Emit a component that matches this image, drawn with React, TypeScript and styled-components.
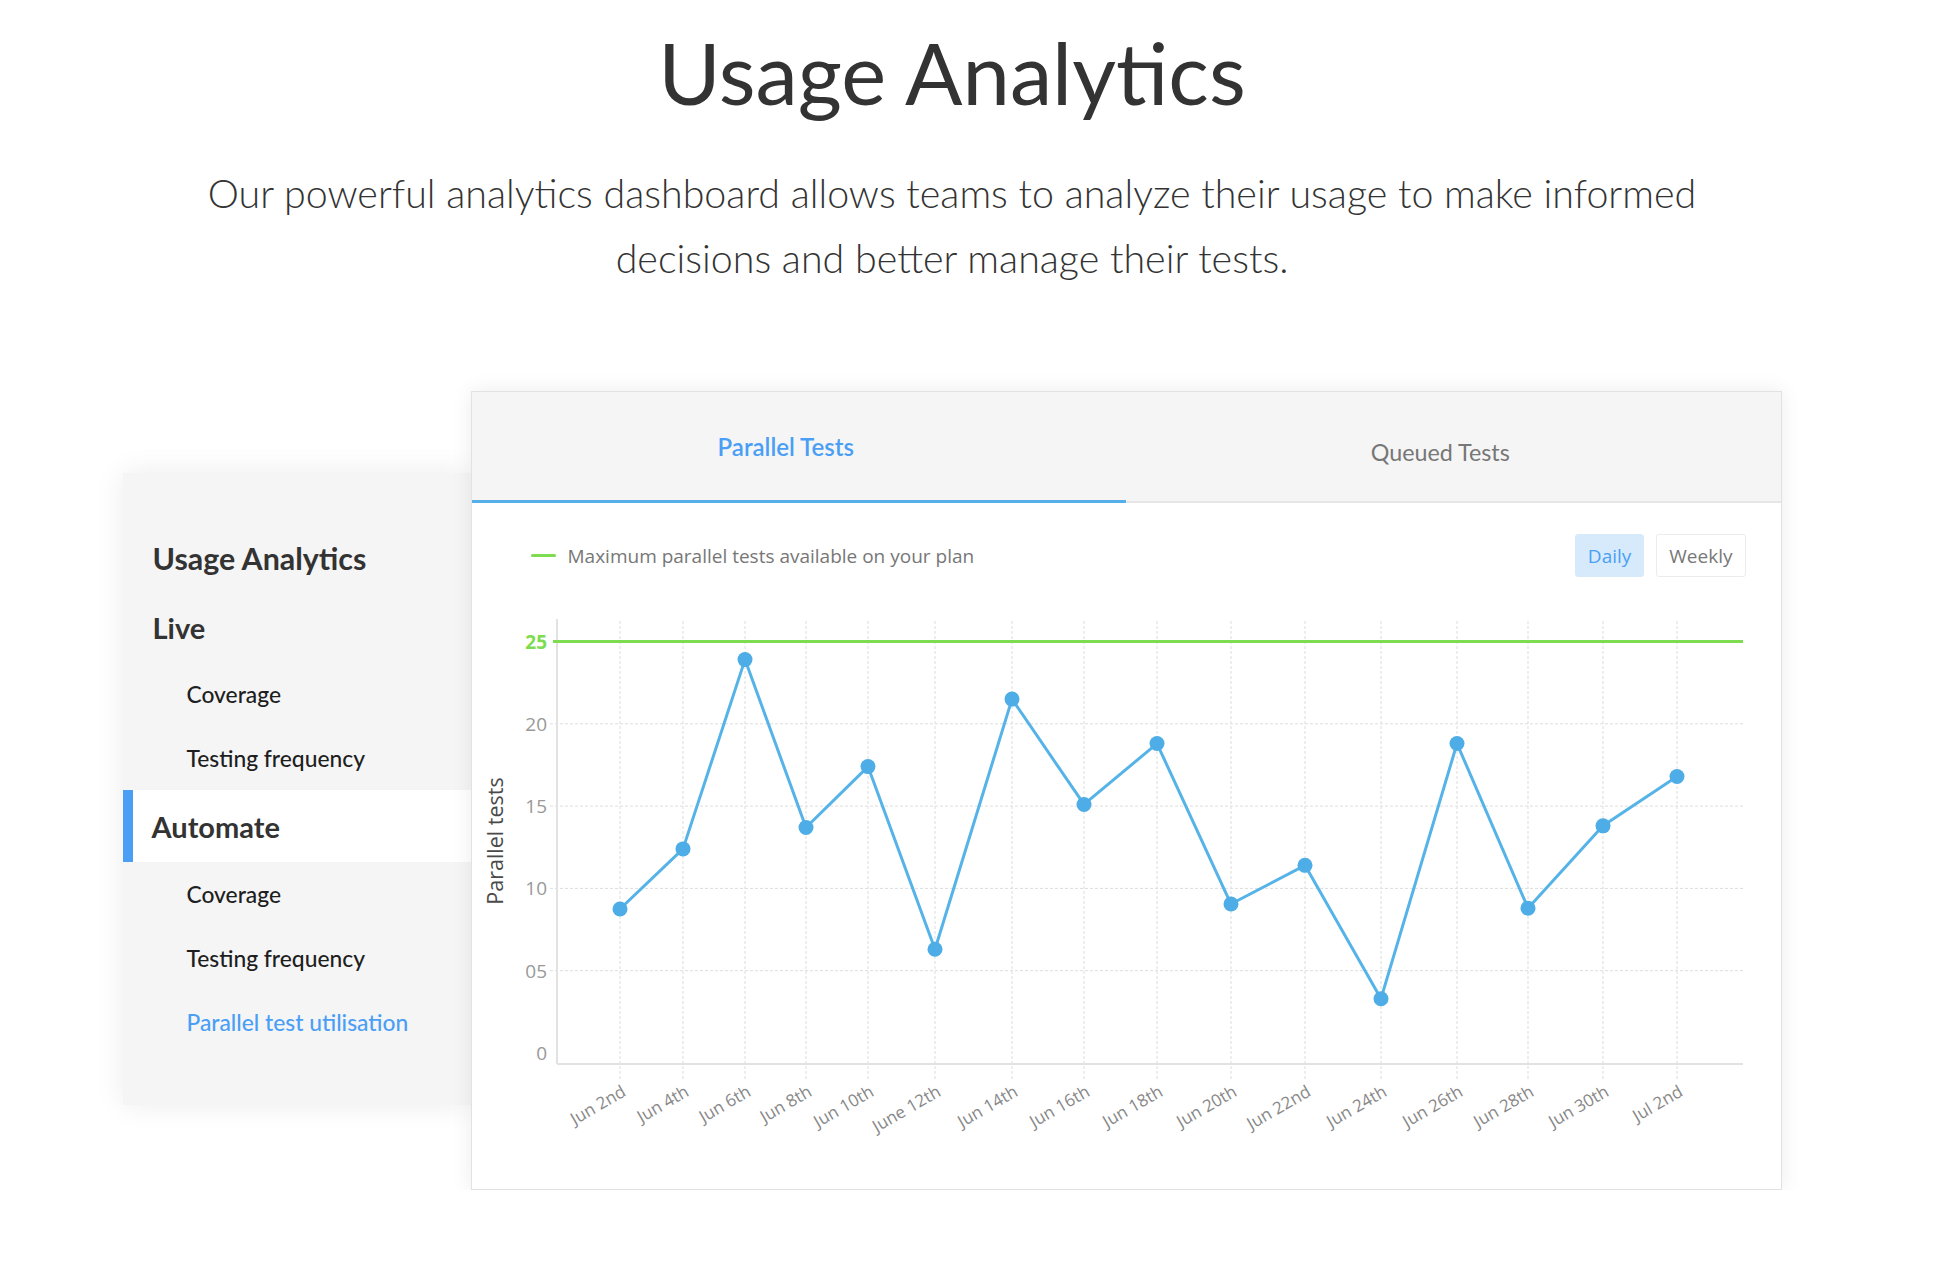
import React from "react";
import styled, { createGlobalStyle } from "styled-components";

const GlobalStyle = createGlobalStyle`
  html, body { margin: 0; padding: 0; background: #ffffff; }
  body { font-family: Lato, "Open Sans", sans-serif; color: #333; }
  * { box-sizing: border-box; }
`;

const Page = styled.div`
  width: 1904px;
  padding-top: 21px;
  display: flex;
  flex-direction: column;
  align-items: center;
`;

const Hero = styled.header`
  display: flex;
  flex-direction: column;
  align-items: center;
  text-align: center;
`;

const Title = styled.h1`
  margin: 0;
  font-family: Lato, sans-serif;
  font-weight: 400;
  font-size: 85px;
  line-height: 103px;
  color: #333;
`;

const Lead = styled.p`
  margin: 36px 0 0;
  font-family: Lato, sans-serif;
  font-weight: 300;
  font-size: 39.4px;
  line-height: 65px;
  color: #333;
`;

const Showcase = styled.section`
  margin-top: 101px;
  display: flex;
  align-items: flex-start;
`;

const Sidebar = styled.nav`
  width: 348px;
  margin-top: 82px;
  padding: 51px 0;
  background: #f5f5f5;
  box-shadow: 0 0 28px rgba(0, 0, 0, 0.08);
  display: flex;
  flex-direction: column;
  position: relative;
  z-index: 0;
`;

const SideTitle = styled.div`
  height: 68px;
  line-height: 68px;
  padding-left: 30px;
  font-weight: 700;
  font-size: 30.4px;
  color: #333;
`;

const SideSection = styled.div<{ $active?: boolean }>`
  height: ${(p) => (p.$active ? "72px" : "70px")};
  display: flex;
  align-items: center;
  padding-left: ${(p) => (p.$active ? "19px" : "30px")};
  font-weight: 700;
  font-size: 29px;
  color: #333;
  background: ${(p) => (p.$active ? "#ffffff" : "transparent")};
  border-left: ${(p) => (p.$active ? "10px solid #4a9ff5" : "none")};
`;

const SideItem = styled.div<{ $active?: boolean }>`
  height: 64px;
  display: flex;
  align-items: center;
  padding-left: 64px;
  font-weight: 500;
  font-size: 22.8px;
  color: ${(p) => (p.$active ? "#4a9ff5" : "#1e1e1e")};
`;

const Card = styled.div`
  width: 1311px;
  background: #ffffff;
  border: 1px solid #e2e2e2;
  box-shadow: 0 0 20px rgba(0, 0, 0, 0.08);
  position: relative;
  z-index: 1;
`;

const Tabs = styled.div`
  display: flex;
  background: #f5f5f5;
`;

const Tab = styled.div<{ $active?: boolean }>`
  flex: 1;
  height: 111px;
  display: flex;
  align-items: center;
  justify-content: center;
  padding-right: 26px;
  padding-top: ${(p) => (p.$active ? "0" : "11px")};
  font-family: Lato, sans-serif;
  font-size: ${(p) => (p.$active ? "24px" : "23.3px")};
  font-weight: ${(p) => (p.$active ? 600 : 400)};
  color: ${(p) => (p.$active ? "#4a9ff5" : "#777")};
  border-bottom: ${(p) => (p.$active ? "3px solid #56afe8" : "2px solid #e6e6e6")};
`;

const CardBody = styled.div`
  padding-top: 31px;
`;

const Toolbar = styled.div`
  height: 43px;
  padding: 0 35px 0 59px;
  display: flex;
  align-items: center;
  justify-content: space-between;
`;

const Legend = styled.div`
  display: flex;
  align-items: center;
  gap: 12px;
  font-family: "Open Sans", sans-serif;
  font-size: 19px;
  color: #777;
`;

const Swatch = styled.span`
  width: 25px;
  height: 3px;
  border-radius: 2px;
  background: #7ddc50;
`;

const Toggle = styled.div`
  display: flex;
  gap: 12px;
`;

const ToggleButton = styled.button<{ $active?: boolean }>`
  height: 43px;
  padding: 0 12px;
  font-family: "Open Sans", sans-serif;
  font-size: 19px;
  border-radius: 3px;
  cursor: pointer;
  background: ${(p) => (p.$active ? "#d7eafc" : "#ffffff")};
  border: 1px solid ${(p) => (p.$active ? "#d7eafc" : "#ececec")};
  color: ${(p) => (p.$active ? "#4a9ff5" : "#777")};
`;

const ChartSvg = styled.svg`
  display: block;
  margin-top: 22px;
`;

/* chart geometry (page coordinates, shifted into the svg) */
const OX = 471;
const OY = 600;
const ZERO_Y = 1054;
const UNIT = 16.46;
const AXIS_X = 556;
const AXIS_Y = 1065;
const RIGHT_X = 1742;

const points: { label: string; x: number; v: number }[] = [
  { label: "Jun 2nd", x: 619, v: 8.75 },
  { label: "Jun 4th", x: 682, v: 12.4 },
  { label: "Jun 6th", x: 744, v: 23.9 },
  { label: "Jun 8th", x: 805, v: 13.7 },
  { label: "Jun 10th", x: 867, v: 17.4 },
  { label: "June 12th", x: 934, v: 6.3 },
  { label: "Jun 14th", x: 1011, v: 21.5 },
  { label: "Jun 16th", x: 1083, v: 15.1 },
  { label: "Jun 18th", x: 1156, v: 18.8 },
  { label: "Jun 20th", x: 1230, v: 9.05 },
  { label: "Jun 22nd", x: 1304, v: 11.4 },
  { label: "Jun 24th", x: 1380, v: 3.3 },
  { label: "Jun 26th", x: 1456, v: 18.8 },
  { label: "Jun 28th", x: 1527, v: 8.8 },
  { label: "Jun 30th", x: 1602, v: 13.8 },
  { label: "Jul 2nd", x: 1676, v: 16.8 },
];

const sx = (x: number) => x - OX;
const sy = (y: number) => y - OY;
const vy = (v: number) => sy(ZERO_Y - v * UNIT);

function Chart() {
  const yTicks = [
    { v: 0, label: "0" },
    { v: 5, label: "05" },
    { v: 10, label: "10" },
    { v: 15, label: "15" },
    { v: 20, label: "20" },
  ];
  const line = points.map((p) => `${sx(p.x)},${vy(p.v)}`).join(" ");
  return (
    <ChartSvg width={1309} height={590} viewBox="0 0 1309 590">
      {points.map((p) => (
        <line
          key={"vg" + p.label}
          x1={sx(p.x)}
          x2={sx(p.x)}
          y1={sy(622)}
          y2={sy(1080)}
          stroke="#dddddd"
          strokeWidth={1}
          strokeDasharray="3 2"
        />
      ))}
      {yTicks
        .filter((t) => t.v > 0)
        .map((t) => (
          <line
            key={"hg" + t.v}
            x1={sx(549)}
            x2={sx(RIGHT_X)}
            y1={vy(t.v)}
            y2={vy(t.v)}
            stroke="#dddddd"
            strokeWidth={1}
            strokeDasharray="3 2"
          />
        ))}
      <line x1={sx(AXIS_X)} x2={sx(AXIS_X)} y1={sy(620)} y2={sy(AXIS_Y)} stroke="#e2e2e2" strokeWidth={2} />
      <line x1={sx(AXIS_X)} x2={sx(RIGHT_X)} y1={sy(AXIS_Y)} y2={sy(AXIS_Y)} stroke="#e2e2e2" strokeWidth={2} />
      <line x1={sx(552)} x2={sx(RIGHT_X)} y1={vy(25)} y2={vy(25)} stroke="#7ddc50" strokeWidth={3} />

      {yTicks.map((t) => (
        <text
          key={"yl" + t.v}
          x={sx(546)}
          y={vy(t.v)}
          textAnchor="end"
          dominantBaseline="central"
          fontFamily="'Open Sans', sans-serif"
          fontSize={19}
          fill="#999"
        >
          {t.label}
        </text>
      ))}
      <text
        x={sx(546)}
        y={vy(25)}
        textAnchor="end"
        dominantBaseline="central"
        fontFamily="'Open Sans', sans-serif"
        fontSize={19}
        fontWeight={700}
        fill="#7ddc50"
      >
        25
      </text>
      <text
        x={sx(493)}
        y={sy(842)}
        textAnchor="middle"
        dominantBaseline="central"
        fontFamily="'Open Sans', sans-serif"
        fontSize={21.5}
        fill="#4a4a4a"
        transform={`rotate(-90 ${sx(493)} ${sy(842)})`}
      >
        Parallel tests
      </text>

      <polyline points={line} fill="none" stroke="#55b3e8" strokeWidth={3} strokeLinejoin="round" />
      {points.map((p) => (
        <circle key={"pt" + p.label} cx={sx(p.x)} cy={vy(p.v)} r={7.5} fill="#4eade6" />
      ))}

      {points.map((p) => (
        <text
          key={"xl" + p.label}
          x={sx(p.x + 7)}
          y={sy(1096)}
          textAnchor="end"
          fontFamily="'Open Sans', sans-serif"
          fontSize={17}
          fill="#888"
          transform={`rotate(-30 ${sx(p.x + 7)} ${sy(1096)})`}
        >
          {p.label}
        </text>
      ))}
    </ChartSvg>
  );
}

export default function App() {
  return (
    <>
      <GlobalStyle />
      <Page>
        <Hero>
          <Title>Usage Analytics</Title>
          <Lead>
            Our powerful analytics dashboard allows teams to analyze their usage to make informed
            <br />
            decisions and better manage their tests.
          </Lead>
        </Hero>
        <Showcase>
          <Sidebar>
            <SideTitle>Usage Analytics</SideTitle>
            <SideSection>Live</SideSection>
            <SideItem>Coverage</SideItem>
            <SideItem>Testing frequency</SideItem>
            <SideSection $active>Automate</SideSection>
            <SideItem>Coverage</SideItem>
            <SideItem>Testing frequency</SideItem>
            <SideItem $active>Parallel test utilisation</SideItem>
          </Sidebar>
          <Card>
            <Tabs>
              <Tab $active>Parallel Tests</Tab>
              <Tab>Queued Tests</Tab>
            </Tabs>
            <CardBody>
              <Toolbar>
                <Legend>
                  <Swatch />
                  Maximum parallel tests available on your plan
                </Legend>
                <Toggle>
                  <ToggleButton $active>Daily</ToggleButton>
                  <ToggleButton>Weekly</ToggleButton>
                </Toggle>
              </Toolbar>
              <Chart />
            </CardBody>
          </Card>
        </Showcase>
      </Page>
    </>
  );
}
